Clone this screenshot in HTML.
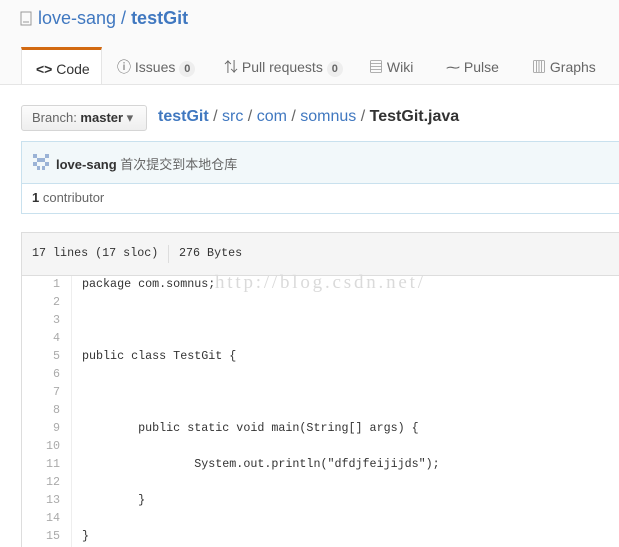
<!DOCTYPE html>
<html><head><meta charset="utf-8"><style>
body{margin:0;width:619px;height:547px;overflow:hidden;background:#fff;font-family:"Liberation Sans","Noto Sans CJK SC",sans-serif;position:relative}
.hdr{position:absolute;left:0;top:0;width:619px;height:84px;background:#fafafa;border-bottom:1px solid #e5e5e5}
.a{position:absolute;white-space:nowrap}
.title{left:38px;top:8px;font-size:18px;color:#4078c0}
.tab{position:absolute;top:48px;height:37px;font-size:14px;color:#666;line-height:38px}
.code-tab{left:21px;width:79px;background:#fff;border:1px solid #e5e5e5;border-top:3px solid #d26911;border-bottom:none;height:34px;color:#333;top:47px;box-sizing:content-box}
.cnt{display:inline-block;background:#eee;border-radius:9px;font-size:11px;padding:0 5px;line-height:16px;color:#666;font-weight:bold}
.btn{left:21px;top:105px;width:124px;height:24px;border:1px solid #d5d5d5;border-radius:3px;background:linear-gradient(#fcfcfc,#eee);font-size:13px;color:#666;line-height:24px;text-indent:10px}
.crumb{left:158px;top:108px;font-size:16px;color:#4078c0}
.box{left:21px;top:141px;width:610px;height:71px;border:1px solid #c9e1ee;border-right:none}
.mono{font-family:"Liberation Mono",monospace}
.ln{position:absolute;left:22px;width:38px;text-align:right;font-size:11.7px;color:#aaa;font-family:"Liberation Mono",monospace}
.cl{position:absolute;left:82px;font-size:11.7px;color:#333;font-family:"Liberation Mono",monospace;white-space:pre}
</style></head><body>
<div class="hdr"></div>
<svg class="a" style="left:20px;top:11px" width="12" height="16"><rect x="1" y="1" width="10" height="13" fill="none" stroke="#999"/><line x1="3" y1="11" x2="9" y2="11" stroke="#999"/></svg>
<div class="a title">love-sang / <b>testGit</b></div>
<div class="tab code-tab"><span style="margin-left:14px;font-weight:bold">&lt;&gt;</span> Code</div>
<div class="tab" style="left:117px">ⓘ Issues <span class="cnt">0</span></div>
<div class="tab" style="left:224px">⇅ Pull requests <span class="cnt">0</span></div>
<div class="tab" style="left:369px">▤ Wiki</div>
<div class="tab" style="left:446px">⁓ Pulse</div>
<div class="tab" style="left:532px">▥ Graphs</div>
<div class="a btn">Branch: <b style="color:#333">master</b> ▾</div>
<div class="a crumb"><b>testGit</b> <span style="color:#666">/</span> src <span style="color:#666">/</span> com <span style="color:#666">/</span> somnus <span style="color:#666">/</span> <b style="color:#333">TestGit.java</b></div>
<div class="a box"><div style="height:41px;background:#f2f8fa;border-bottom:1px solid #c9e1ee"></div></div>
<svg class="a" style="left:33px;top:154px" width="16" height="16"><g fill="#9bb3d6"><rect x="0" y="0" width="4" height="4"/><rect x="12" y="0" width="4" height="4"/><rect x="4" y="4" width="8" height="4"/><rect x="0" y="8" width="4" height="4"/><rect x="12" y="8" width="4" height="4"/><rect x="4" y="12" width="3" height="4"/><rect x="9" y="12" width="3" height="4"/></g></svg>
<div class="a" style="left:56px;top:154px;font-size:13px;color:#666"><b style="color:#333">love-sang</b> 首次提交到本地仓库</div>
<div class="a" style="left:32px;top:190px;font-size:13px;color:#666"><b style="color:#333">1</b> contributor</div>
<div class="a" style="left:21px;top:232px;width:610px;height:42px;background:#f5f5f5;border:1px solid #ddd;border-right:none"></div>
<div class="a mono" style="left:32px;top:246px;font-size:11.7px;color:#333">17 lines (17 sloc)</div>
<div class="a" style="left:168px;top:245px;width:1px;height:18px;background:#ddd"></div>
<div class="a mono" style="left:179px;top:246px;font-size:11.7px;color:#333">276 Bytes</div>
<div class="a" style="left:21px;top:276px;width:1px;height:271px;background:#ddd"></div>
<div class="a" style="left:71px;top:276px;width:1px;height:271px;background:#eee"></div>
<div class="ln" style="top:277px">1</div><div class="ln" style="top:295px">2</div><div class="ln" style="top:313px">3</div><div class="ln" style="top:331px">4</div><div class="ln" style="top:349px">5</div><div class="ln" style="top:367px">6</div><div class="ln" style="top:385px">7</div><div class="ln" style="top:403px">8</div><div class="ln" style="top:421px">9</div><div class="ln" style="top:439px">10</div><div class="ln" style="top:457px">11</div><div class="ln" style="top:475px">12</div><div class="ln" style="top:493px">13</div><div class="ln" style="top:511px">14</div><div class="ln" style="top:529px">15</div>
<div class="cl" style="top:277px">package com.somnus;</div>
<div class="a" style="left:215px;top:272px;font-family:'Liberation Serif',serif;font-size:19px;letter-spacing:2.8px;color:#dadada">http://blog.csdn.net/</div>
<div class="cl" style="top:349px">public class TestGit {</div>
<div class="cl" style="top:421px">        public static void main(String[] args) {</div>
<div class="cl" style="top:457px">                System.out.println("dfdjfeijijds");</div>
<div class="cl" style="top:493px">        }</div>
<div class="cl" style="top:529px">}</div>
</body></html>
